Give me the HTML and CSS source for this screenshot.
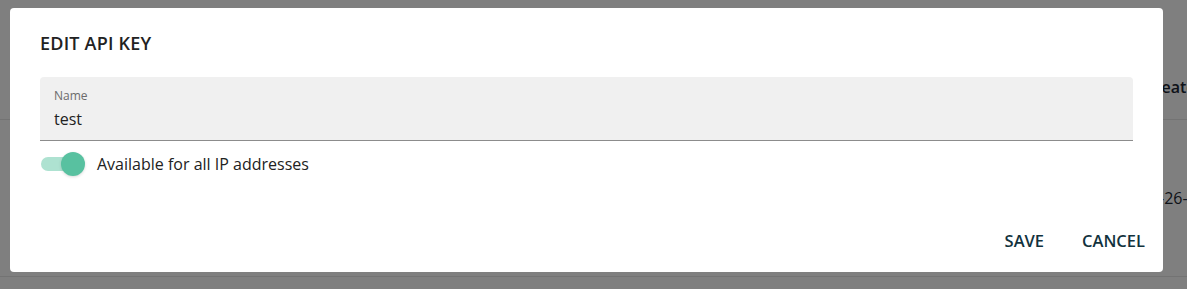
FILE: index.html
```html
<!DOCTYPE html>
<html lang="en">
<head>
    <meta charset="UTF-8">
    <meta name="viewport" content="width=device-width, initial-scale=1.0">
    <title>Edit API key</title>
    <link rel="stylesheet" href="styles.css">
</head>
<body>
    <div class="page">
        <div class="table">
            <div class="row head">
                <div class="cell"></div>
                <div class="cell">Created</div>
            </div>
            <div class="row">
                <div class="cell"></div>
                <div class="cell">2024-05-26-<span class="accent">08:14:22</span></div>
            </div>
        </div>
    </div>

    <div class="backdrop">
        <div class="dialog">
            <h2 class="dialog-title">EDIT API KEY</h2>

            <div class="field">
                <label for="key-name">Name</label>
                <input type="text" id="key-name" value="test">
            </div>

            <div class="switch-row">
                <span class="switch on">
                    <span class="track"></span>
                    <span class="thumb"></span>
                </span>
                <span class="switch-label">Available for all IP addresses</span>
            </div>

            <div class="actions">
                <button class="text-btn">SAVE</button>
                <button class="text-btn">CANCEL</button>
            </div>
        </div>
    </div>
</body>
</html>
```

FILE: styles.css
```css
* {
    margin: 0;
    padding: 0;
    box-sizing: border-box;
}

body {
    font-family: 'Open Sans', 'Noto Sans', sans-serif;
    background-color: #ffffff;
    color: #1c2733;
    height: 289px;
    overflow: hidden;
}

/* page behind the dialog */
.page {
    padding-top: 54px;
    overflow: hidden;
}

.row {
    display: grid;
    grid-template-columns: 1087px 176px;
    height: 157px;
    align-items: center;
    border-bottom: 1px solid #e6e6e6;
    font-size: 16px;
    white-space: nowrap;
}

.row.head {
    height: 66px;
    font-weight: 600;
}

.row .cell:last-child {
    text-align: center;
}

.accent {
    color: #e0892a;
}

/* modal */
.backdrop {
    position: fixed;
    inset: 0;
    background-color: rgba(0, 0, 0, 0.5);
    padding: 8px 24px 0 10px;
}

.dialog {
    background-color: #ffffff;
    border-radius: 4px;
    height: 264px;
    padding: 23px 30px 0 30px;
    display: flex;
    flex-direction: column;
}

.dialog-title {
    font-size: 18px;
    font-weight: 600;
    letter-spacing: 0.2px;
    color: #222222;
    line-height: 24px;
}

.field {
    margin-top: 22px;
    background-color: #f0f0f0;
    border-radius: 4px 4px 0 0;
    border-bottom: 1px solid #8c8c8c;
    height: 64px;
    padding: 11px 14px 0 14px;
    display: flex;
    flex-direction: column;
}

.field label {
    font-size: 12px;
    color: #6b6b6b;
    line-height: 16px;
}

.field input {
    border: none;
    background: transparent;
    font-family: inherit;
    font-size: 16px;
    color: #222222;
    line-height: 24px;
    margin-top: 3px;
    outline: none;
}

.switch-row {
    display: flex;
    align-items: center;
    gap: 11px;
    margin-top: 11px;
    height: 24px;
}

.switch {
    position: relative;
    width: 46px;
    height: 24px;
    display: inline-block;
}

.switch .track {
    position: absolute;
    left: 1px;
    top: 5px;
    width: 38px;
    height: 14px;
    border-radius: 7px;
    background-color: #aee2d1;
}

.switch .thumb {
    position: absolute;
    left: 21px;
    top: 0;
    width: 24px;
    height: 24px;
    border-radius: 50%;
    background-color: #58c1a0;
    box-shadow: 0 1px 3px rgba(0, 0, 0, 0.15);
}

.switch-label {
    font-size: 16px;
    color: #222222;
}

.actions {
    margin-top: auto;
    margin-bottom: 15px;
    margin-right: -24px;
    display: flex;
    justify-content: flex-end;
    gap: 14px;
}

.text-btn {
    background: none;
    border: none;
    font-family: inherit;
    font-size: 16.5px;
    font-weight: 600;
    color: #12323d;
    padding: 6px 12px;
    cursor: pointer;
    line-height: 20px;
}
```
